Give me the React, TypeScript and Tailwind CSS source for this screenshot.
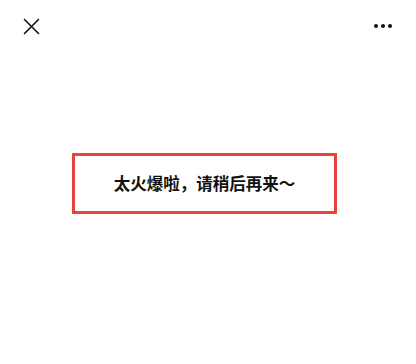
export default function App() {
  return (
    <div className="flex h-[364px] w-[416px] flex-col bg-white font-['Noto_Sans_CJK_SC',sans-serif]">
      {/* Top bar */}
      <div className="flex h-[52px] items-center justify-between pl-[23px] pr-[24px]">
        <svg width="17" height="17" viewBox="0 0 17 17" fill="none">
          <path d="M1.5 1.5L15.5 15.5M15.5 1.5L1.5 15.5" stroke="#111" strokeWidth="1.6" strokeLinecap="round" />
        </svg>
        <div className="flex items-center gap-[3px]">
          <span className="h-[4px] w-[4px] rounded-full bg-[#111]" />
          <span className="h-[4px] w-[4px] rounded-full bg-[#111]" />
          <span className="h-[4px] w-[4px] rounded-full bg-[#111]" />
        </div>
      </div>

      {/* Notice box */}
      <div className="ml-[72px] mt-[101px] flex h-[61px] w-[265px] items-center justify-center border-[3px] border-[#e64340]">
        <p className="text-[16.5px] font-bold leading-none text-[#111]">太火爆啦，请稍后再来～</p>
      </div>
    </div>
  );
}
